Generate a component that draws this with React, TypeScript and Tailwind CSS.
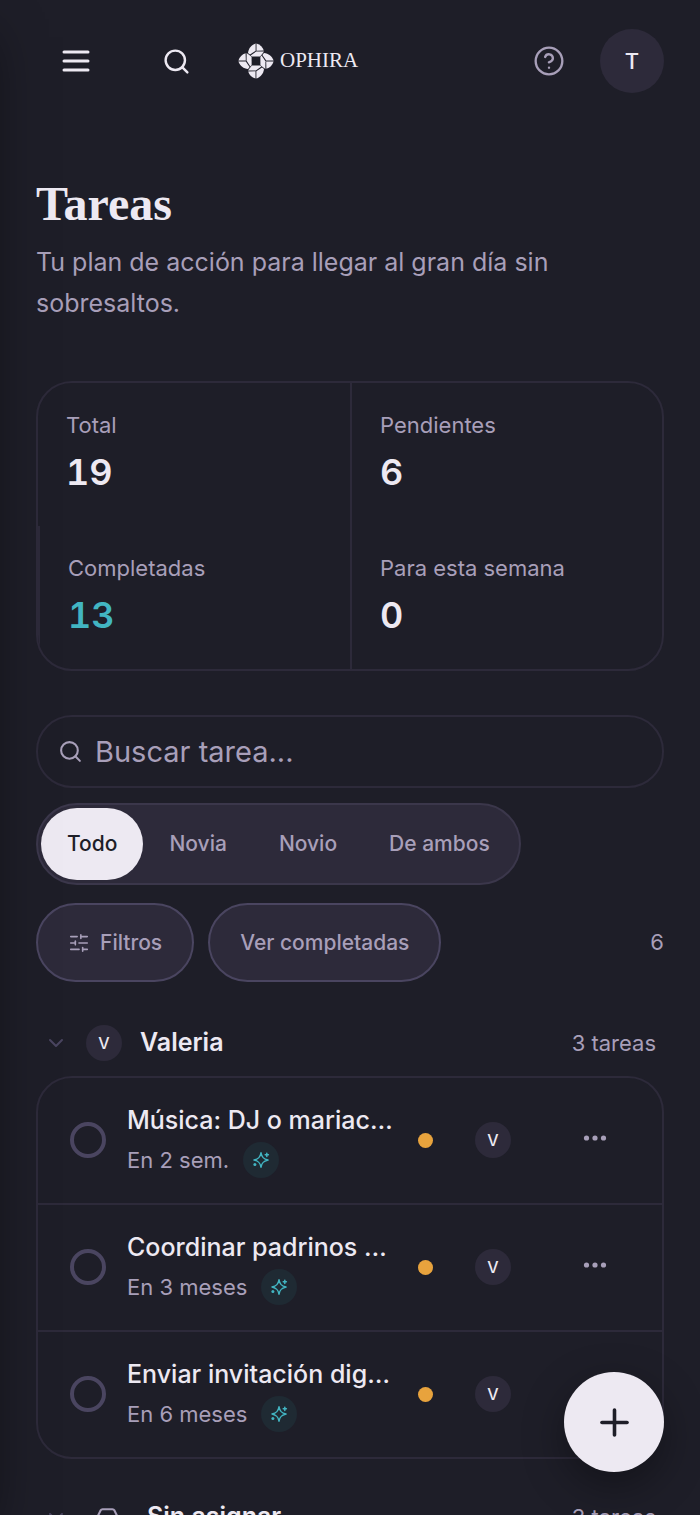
import { useState } from "react";
import {
  ChevronDown,
  CircleHelp,
  Inbox,
  Plus,
  Search,
  SlidersHorizontal,
} from "lucide-react";

const STATS = [
  { label: "Total", value: 19, cell: "", color: "text-[#ede9f2]" },
  { label: "Pendientes", value: 6, cell: "border-l-2", color: "text-[#ede9f2]" },
  { label: "Completadas", value: 13, cell: "border-l-2", color: "text-[#42b5c2]" },
  { label: "Para esta semana", value: 0, cell: "border-l-2", color: "text-[#ede9f2]" },
];

const OWNERS = ["Todo", "Novia", "Novio", "De ambos"];

const TASKS = [
  { title: "Música: DJ o mariac…", due: "En 2 sem." },
  { title: "Coordinar padrinos …", due: "En 3 meses" },
  { title: "Enviar invitación dig…", due: "En 6 meses" },
];

function MenuIcon() {
  return (
    <svg width="36" height="36" viewBox="0 0 24 24" fill="none" stroke="currentColor" strokeWidth="2" strokeLinecap="round">
      <path d="M4 6h16M4 12h16M4 18h16" />
    </svg>
  );
}

function SparkleIcon() {
  return (
    <svg width="20" height="20" viewBox="0 0 20 20" fill="none" stroke="currentColor" strokeWidth="1.5" strokeLinecap="round" strokeLinejoin="round">
      <path d="M10 2.8C10.8 7.2 12.4 9 17 10C12.4 11 10.8 12.8 10 17.2C9.2 12.8 7.6 11 3 10C7.6 9 9.2 7.2 10 2.8Z" />
      <path d="M15.8 3.2v3.2M14.2 4.8h3.2" />
      <circle cx="3.9" cy="14.4" r="1.5" fill="currentColor" stroke="none" />
    </svg>
  );
}

function Logo() {
  return (
    <svg width="40" height="40" viewBox="-20 -20 40 40" fill="currentColor">
      {[0, 90, 180, 270].map((angle) => (
        <g key={angle} transform={`rotate(${angle})`}>
          <path d="M-.4-17.6C-4.8-16-7.6-12.4-8-8L-6-6.4-.4-10.2Z" />
          <path d="M.5-17.6C4.2-16.4 6.8-14 7.8-10.4L.5-10.2Z" />
          <path d="M.2-9.4 8-9.4 4.2-4.4-4-4.4-5.4-5.6Z" />
        </g>
      ))}
    </svg>
  );
}

function Avatar({ initial }: { initial: string }) {
  return (
    <span className="flex size-9 shrink-0 items-center justify-center rounded-full bg-[#2d2a3a] text-base font-medium">
      {initial}
    </span>
  );
}

function TaskRow({ title, due }: { title: string; due: string }) {
  return (
    <li className="flex items-center px-8 pt-6 pb-[25px]">
      <input
        type="checkbox"
        aria-label={title}
        className="size-9 shrink-0 appearance-none rounded-full border-4 border-[#4a4560] checked:bg-[#4a4560]"
      />
      <div className="ml-[21px] min-w-0 flex-1">
        <p className="truncate text-[25px] leading-9 font-medium">{title}</p>
        <div className="mt-1 flex items-center gap-[14px]">
          <span className="text-[22px] leading-9 text-[#a89fb9]">{due}</span>
          <span className="flex size-9 items-center justify-center rounded-full bg-[#1f2a33] text-[#42b5c2]">
            <SparkleIcon />
          </span>
        </div>
      </div>
      <span className="ml-4 size-[15px] shrink-0 rounded-full bg-[#e8a33d]" />
      <span className="ml-[42px]">
        <Avatar initial="V" />
      </span>
      <button type="button" aria-label="Más opciones" className="ml-12 flex h-9 w-[71px] shrink-0 items-center justify-center pb-1 text-[#a89fb9]">
        <svg width="24" height="6" viewBox="0 0 24 6" fill="currentColor">
          <circle cx="3.5" cy="3" r="2.6" />
          <circle cx="12" cy="3" r="2.6" />
          <circle cx="20.5" cy="3" r="2.6" />
        </svg>
      </button>
    </li>
  );
}

function GroupHeader({ name, count, children }: { name: string; count: string; children: React.ReactNode }) {
  return (
    <div className="flex h-11 items-center px-2">
      <button type="button" aria-label={`Contraer ${name}`} className="mr-[18px] text-[#4a4560]">
        <ChevronDown size={24} />
      </button>
      {children}
      <h2 className="ml-[18px] text-[25px] font-semibold">{name}</h2>
      <span className="ml-auto text-[22px] text-[#a89fb9]">{count}</span>
    </div>
  );
}

export default function App() {
  const [owner, setOwner] = useState("Todo");

  return (
    <div className="h-screen overflow-hidden bg-[#1e1e28] font-['Inter',sans-serif] text-[#ede9f2]">
      <aside className="fixed inset-y-0 right-full w-72 shadow-[0_25px_50px_-12px_rgba(0,0,0,0.5)]" />

      <header className="flex items-center px-9 py-[29px]">
        <button type="button" aria-label="Menú" className="flex h-16 w-20 items-center justify-center">
          <MenuIcon />
        </button>
        <button type="button" aria-label="Buscar" className="ml-7 flex size-16 items-center justify-center">
          <Search size={29} />
        </button>
        <a href="#" className="ml-7 flex items-center gap-1">
          <Logo />
          <span className="font-['Liberation_Serif',serif] text-[21px]">OPHIRA</span>
        </a>
        <button type="button" aria-label="Ayuda" className="ml-auto flex size-16 items-center justify-center text-[#a89fb9]">
          <CircleHelp size={32} strokeWidth={1.75} />
        </button>
        <button type="button" aria-label="Cuenta" className="ml-[19px] flex size-16 items-center justify-center rounded-full bg-[#2d2a3a] text-[22px] font-medium">
          T
        </button>
      </header>

      <main className="px-9 pt-[58px]">
        <h1 className="font-['Liberation_Serif',serif] text-[48px] leading-[48px] font-bold">Tareas</h1>
        <p className="mt-[14px] text-[25px] leading-[41px] text-[#a89fb9]">
          Tu plan de acción para llegar al gran día sin sobresaltos.
        </p>

        <dl className="mt-[57px] grid grid-cols-2 overflow-hidden rounded-[36px] border-2 border-[#2d2a3a]">
          {STATS.map((stat) => (
            <div key={stat.label} className={`border-[#2d2a3a] px-7 py-7 ${stat.cell}`}>
              <dt className="text-[22px] leading-7 text-[#a89fb9]">{stat.label}</dt>
              <dd className={`mt-2 text-[36px] leading-[51px] font-semibold tabular-nums ${stat.color}`}>{stat.value}</dd>
            </div>
          ))}
        </dl>

        <label className="mt-11 flex h-[73px] items-center gap-3 rounded-[36px] border-2 border-[#2d2a3a] px-5 text-[#a89fb9]">
          <Search size={25} className="shrink-0" />
          <input
            type="text"
            aria-label="Buscar tarea"
            placeholder="Buscar tarea..."
            className="min-w-0 flex-1 bg-transparent text-[29px] outline-none placeholder:text-[#a89fb9]"
          />
        </label>

        <div className="mt-[15px] flex w-fit rounded-[41px] border-2 border-[#3b374b] bg-[#2d2a3a] p-[3px]">
          {OWNERS.map((name) => (
            <button
              key={name}
              type="button"
              onClick={() => setOwner(name)}
              className={`h-[72px] rounded-[36px] px-[26px] text-[21px] font-medium ${
                name === owner ? "bg-[#ede9f2] text-[#1e1e28]" : "text-[#a89fb9]"
              }`}
            >
              {name}
            </button>
          ))}
        </div>

        <div className="mt-[18px] flex items-center gap-[14px] text-[#a89fb9]">
          <button type="button" className="flex h-[79px] items-center gap-[10px] rounded-[40px] border-2 border-[#4a4560] bg-[#2d2a3a] px-[30px] text-[21px] font-medium">
            <SlidersHorizontal size={22} strokeWidth={1.75} />
            Filtros
          </button>
          <button type="button" className="h-[79px] rounded-[40px] border-2 border-[#4a4560] bg-[#2d2a3a] px-[30px] text-[21px] font-medium">
            Ver completadas
          </button>
          <span className="ml-auto text-[22px]">6</span>
        </div>

        <section className="mt-[39px]">
          <GroupHeader name="Valeria" count="3 tareas">
            <Avatar initial="V" />
          </GroupHeader>
          <ul className="mt-[11px] divide-y-2 divide-[#2d2a3a] rounded-[36px] border-2 border-[#2d2a3a]">
            {TASKS.map((task) => (
              <TaskRow key={task.title} {...task} />
            ))}
          </ul>
        </section>

        <section className="mt-9">
          <GroupHeader name="Sin asignar" count="3 tareas">
            <span className="flex w-[43px] justify-center text-[#a89fb9]">
              <Inbox size={25} />
            </span>
          </GroupHeader>
        </section>
      </main>

      <button
        type="button"
        aria-label="Nueva tarea"
        className="fixed right-9 bottom-[43px] flex size-[100px] items-center justify-center rounded-full bg-[#ede9f2] text-[#1e1e28] shadow-[0_14px_42px_rgba(0,0,0,0.35)]"
      >
        <Plus size={43} />
      </button>
    </div>
  );
}
